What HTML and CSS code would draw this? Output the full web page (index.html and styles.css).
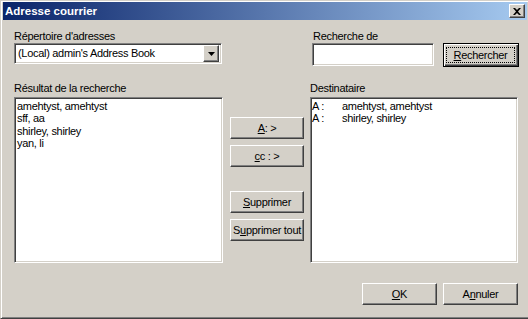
FILE: index.html
```html
<!DOCTYPE html>
<html lang="fr">

<head>
    <meta charset="UTF-8">
    <meta name="viewport" content="width=device-width, initial-scale=1.0">
    <title>Adresse courrier</title>
    <link rel="stylesheet" href="styles.css">
</head>

<body>
    <div class="window">
        <div class="titlebar">
            <span class="title">Adresse courrier</span>
            <button class="btn close" title="Fermer">
                <svg width="8" height="7" viewBox="0 0 8 7">
                    <path d="M0 0h2l2 2 2-2h2L5 3.5 8 7H6L4 5 2 7H0l3-3.5z" fill="#000" />
                </svg>
            </button>
        </div>

        <div class="content">
            <div class="row top-row">
                <div class="field book">
                    <label>Répertoire d'adresses</label>
                    <div class="combo sunken">
                        <span class="combo-text">(Local) admin's Address Book</span>
                        <span class="btn drop">
                            <svg width="7" height="4" viewBox="0 0 7 4">
                                <path d="M0 0h7L3.5 4z" fill="#000" />
                            </svg>
                        </span>
                    </div>
                </div>
                <div class="field search">
                    <label>Recherche de</label>
                    <div class="search-line">
                        <input class="sunken search-input" type="text">
                        <button class="btn default"><span class="focus"><u>R</u>echercher</span></button>
                    </div>
                </div>
            </div>

            <div class="row lists-row">
                <div class="field results">
                    <label>Résultat de la recherche</label>
                    <ul class="listbox sunken">
                        <li>amehtyst, amehtyst</li>
                        <li>sff, aa</li>
                        <li>shirley, shirley</li>
                        <li>yan, li</li>
                    </ul>
                </div>

                <div class="actions">
                    <button class="btn"><u>A</u> : &gt;</button>
                    <button class="btn"><u>c</u>c : &gt;</button>
                    <button class="btn spaced"><u>S</u>upprimer</button>
                    <button class="btn">S<u>u</u>pprimer tout</button>
                </div>

                <div class="field dest">
                    <label>Destinataire</label>
                    <ul class="listbox sunken dest-list">
                        <li><span class="kind">A :</span><span>amehtyst, amehtyst</span></li>
                        <li><span class="kind">A :</span><span>shirley, shirley</span></li>
                    </ul>
                </div>
            </div>

            <div class="row bottom-row">
                <button class="btn"><u>O</u>K</button>
                <button class="btn">A<u>n</u>nuler</button>
            </div>
        </div>
    </div>
</body>

</html>
```

FILE: styles.css
```css
* {
    margin: 0;
    padding: 0;
    box-sizing: border-box;
}

body {
    background-color: #d4d0c8;
    font-family: "Liberation Sans", Arial, sans-serif;
    font-size: 11px;
    letter-spacing: -0.3px;
    color: #000;
    overflow: hidden;
}

.window {
    width: 530px;
    height: 319px;
    border: 1px solid;
    border-color: #d4d0c8 #404040 #404040 #d4d0c8;
    box-shadow: inset 1px 1px #fff, inset -1px -1px #808080;
    padding: 1px 2px 2px 2px;
}

/* barre de titre */
.titlebar {
    height: 18px;
    display: flex;
    align-items: center;
    justify-content: space-between;
    padding: 0 2px;
    background: linear-gradient(to right, #0a246a, #a6caf0);
}

.title {
    color: #fff;
    font-weight: bold;
    font-size: 11.5px;
    letter-spacing: 0;
}

/* boutons et champs 3D */
.btn {
    display: flex;
    align-items: center;
    justify-content: center;
    font: inherit;
    letter-spacing: inherit;
    color: #000;
    background-color: #d4d0c8;
    border: 1px solid;
    border-color: #fff #404040 #404040 #fff;
    box-shadow: inset -1px -1px #808080;
    height: 22px;
}

.btn.default {
    border: 1px solid #000;
    box-shadow: inset 1px 1px #fff, inset -1px -1px #404040, inset -2px -2px #808080;
    width: 76px;
    height: 24px;
    align-items: stretch;
}

.focus {
    flex: 1;
    display: flex;
    align-items: center;
    justify-content: center;
    border: 1px dotted #000;
    margin: 3px 3px 3px 2px;
}

.close {
    width: 16px;
    height: 14px;
}

.sunken {
    background-color: #fff;
    border: 1px solid;
    border-color: #808080 #fff #fff #808080;
    box-shadow: inset 1px 1px #404040, inset -1px -1px #d4d0c8;
}

.content {
    padding: 10px 0 0 11px;
}

.row {
    display: flex;
}

label {
    display: block;
    line-height: 13px;
}

/* ligne du haut */
.book {
    width: 208px;
}

.combo {
    height: 21px;
    display: flex;
    align-items: center;
    justify-content: space-between;
    padding: 2px 2px 2px 3px;
}

.combo-text {
    line-height: 17px;
}

.drop {
    width: 16px;
    height: 17px;
}

.search {
    margin-left: 90px;
}

.search label {
    padding-left: 1px;
}

.search-line {
    display: flex;
    align-items: flex-start;
    gap: 9px;
}

.search-input {
    width: 122px;
    height: 23px;
    outline: none;
}

/* listes */
.lists-row {
    margin-top: 15px;
}

.lists-row label {
    margin-bottom: 2px;
}

.results {
    width: 209px;
}

.dest {
    width: 208px;
    margin-left: 6px;
}

.listbox {
    list-style: none;
    height: 166px;
    padding: 2px 2px;
    line-height: 12.4px;
}

.dest-list {
    padding-left: 1px;
}

.dest-list li {
    display: flex;
}

.kind {
    width: 30px;
}

.actions {
    width: 74px;
    margin-left: 7px;
    padding-top: 35px;
    display: flex;
    flex-direction: column;
    gap: 6px;
}

.actions .spaced {
    margin-top: 18px;
}

/* boutons du bas */
.bottom-row {
    width: 504px;
    margin-top: 20px;
    justify-content: flex-end;
    gap: 6px;
}

.bottom-row .btn {
    width: 75px;
}
```
